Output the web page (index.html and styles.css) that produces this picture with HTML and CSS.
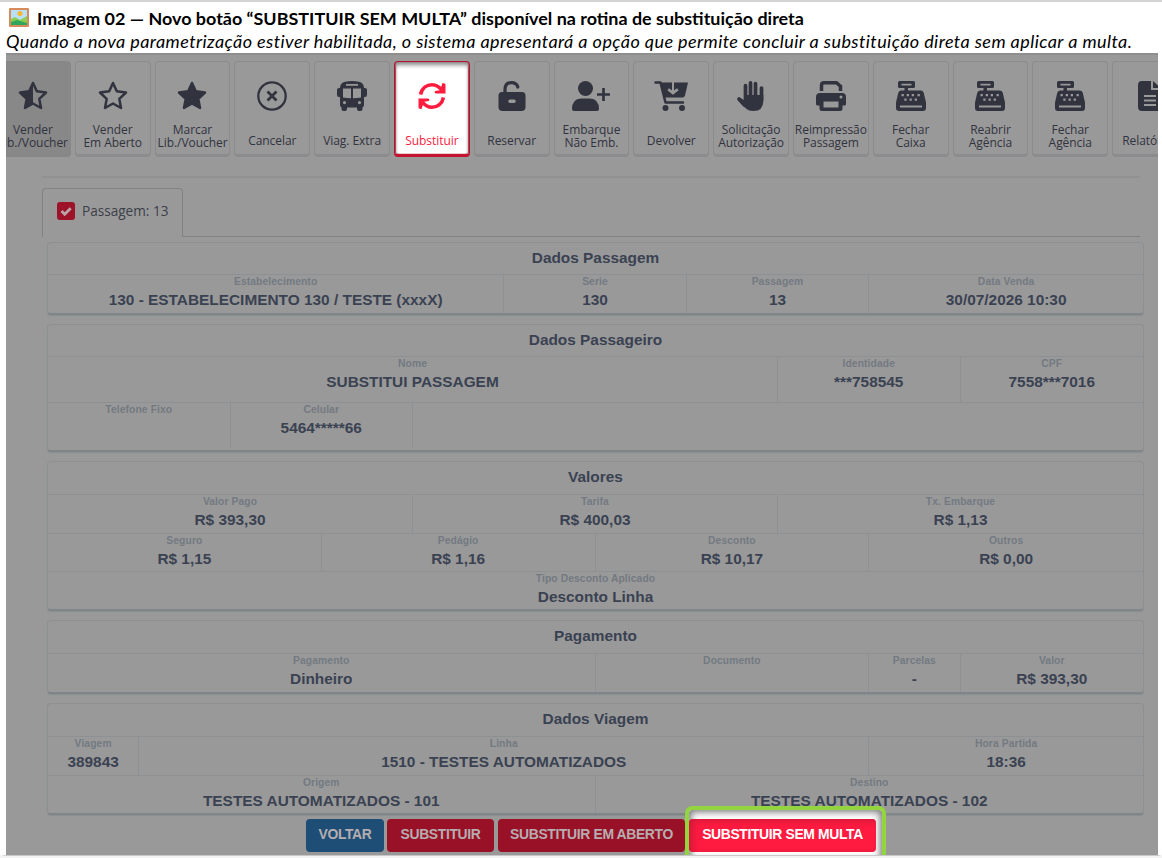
FILE: index.html
```html
<!DOCTYPE html>
<html lang="pt-BR">
<head>
<meta charset="utf-8">
<title>Substituir sem multa</title>
<link rel="stylesheet" href="styles.css">
</head>
<body>
<svg class="defs" aria-hidden="true">
  <symbol id="cash" viewBox="0 0 30 30"><path fill="currentColor" fill-rule="evenodd" d="M3.500 0h14q1.500 0 1.500 1.500v4q0 1.500-1.500 1.500H12v2.500h13q2.300 0 2.800 2.500L30 21.500V27q0 3-3 3H3q-3 0-3-3v-5.500l2.200-9.500Q2.700 9.500 5 9.500h3.500V7h-5Q2 7 2 5.500v-4Q2 0 3.500 0zM5.500 2.700v1.700h10V2.700zM4 24.500v2h22v-2zM5.500 13v2.200h2.300V13zM10.700 13v2.200H13V13zM15.700 13v2.200H18V13zM21.500 13v2.200h2.300V13zM8.300 17.500v2.200h2.300v-2.200zM13.500 17.500v2.200h2.300v-2.200zM18.700 17.500v2.200H21v-2.200z"/></symbol>
</svg>
<header class="caption">
  <h1 class="title"><svg class="picture" viewBox="0 0 20 19"><rect width="20" height="19" rx="1" fill="#d68b5d"/><path fill="#b9dff2" d="M2 2h16v15H2z"/><circle cx="11" cy="5.500" r="2.500" fill="#fbb52b"/><path fill="#8bcf54" d="M2 11l4-2 5 3 7-4v9H2z"/><path fill="#30a65b" d="M2 14l6-2 10 3v2H2z"/></svg><span class="title-text">Imagem 02 — Novo botão “SUBSTITUIR SEM MULTA” disponível na rotina de substituição direta</span></h1>
  <p class="subtitle">Quando a nova parametrização estiver habilitada, o sistema apresentará a opção que permite concluir a substituição direta sem aplicar a multa.</p>
</header>
<main class="screen">
  <nav class="toolbar">
    <div class="tool pressed"><svg class="icon" viewBox="0 0 30 30"><path fill="none" stroke="currentColor" stroke-width="2.500" stroke-linejoin="round" d="M15 2l3.800 8.300 9.200 1.200-6.700 6.300 1.700 9.200-8-4.500-8 4.500 1.700-9.200L2 11.500l9.200-1.200z"/><path fill="currentColor" d="M15 2v20.500L7 27l1.700-9.200L2 11.500l9.200-1.200z"/></svg><span class="name">Vender<br>Lib./Voucher</span></div>
    <div class="tool"><svg class="icon" viewBox="0 0 30 30"><path fill="none" stroke="currentColor" stroke-width="2.500" stroke-linejoin="round" d="M15 2l3.800 8.300 9.200 1.200-6.700 6.300 1.700 9.200-8-4.500-8 4.500 1.700-9.200L2 11.500l9.200-1.200z"/></svg><span class="name">Vender<br>Em Aberto</span></div>
    <div class="tool"><svg class="icon" viewBox="0 0 30 30"><path fill="currentColor" stroke="currentColor" stroke-width="2.500" stroke-linejoin="round" d="M15 2l3.800 8.300 9.200 1.200-6.700 6.300 1.700 9.200-8-4.500-8 4.500 1.700-9.200L2 11.500l9.200-1.200z"/></svg><span class="name">Marcar<br>Lib./Voucher</span></div>
    <div class="tool"><svg class="icon" viewBox="0 0 30 30"><g fill="none" stroke="currentColor" stroke-width="2.300"><circle cx="15" cy="15" r="13.700"/><path stroke-width="2.800" d="M10.500 10.500l9 9m0-9l-9 9"/></g></svg><span class="name one">Cancelar</span></div>
    <div class="tool"><svg class="icon" viewBox="0 0 30 30"><path fill="currentColor" fill-rule="evenodd" d="M8 0.800Q15-.8 22 .8q5 1.200 5 6.200h1q2 0 2 2v5q0 2-2 2h-1v8q0 2-1.500 2.300V28q0 2-2 2h-1.500q-2 0-2-2v-1.500H10V28q0 2-2 2H6.500q-2 0-2-2v-1.700Q3 26 3 24v-8H2q-2 0-2-2V9q0-2 2-2h1q0-5 5-6.200zM9 3v1.800h12V3zM6 7.500v9q4 .8 8 .8V7.500zM16 7.500v9.800q4 0 8-.8v-9zM7.500 20a1.600 1.600 0 1 0 0 3.200 1.600 1.600 0 1 0 0-3.200zM22.500 20a1.600 1.600 0 1 0 0 3.200 1.600 1.600 0 1 0 0-3.200z"/></svg><span class="name one">Viag. Extra</span></div>
    <div class="tool chosen"><svg class="icon" viewBox="0 0 30 30"><path fill="none" stroke="currentColor" stroke-width="3.600" d="M3.500 13.500C5 7 10 3.700 15 3.700c4.500 0 7.500 2.300 10 5.800M26.500 16.500C25 23 20 26.300 15 26.300c-4.500 0-7.500-2.300-10-5.800"/><path fill="currentColor" d="M25.500 2q3 0 3 2v8.500H19q-2-.5-1-2.500l5-.7zM4.500 28q-3 0-3-2v-8.500H11q2 .5 1 2.500l-5 .7z"/></svg><span class="name one">Substituir</span></div>
    <div class="tool"><svg class="icon" viewBox="0 0 30 30"><path fill="none" stroke="currentColor" stroke-width="3.200" stroke-linecap="round" d="M8 13V8.500q0-6.900 6.500-6.900 5 0 6.300 4.400"/><path fill="currentColor" fill-rule="evenodd" d="M5 11h20q3.500 0 3.500 3.500V26q0 4-4 4h-19q-4 0-4-4V14.500Q1.500 11 5 11zM13 18.500a1.700 1.700 0 0 0 0 3.500h4a1.700 1.700 0 0 0 0-3.500z"/></svg><span class="name one">Reservar</span></div>
    <div class="tool"><svg class="icon wide" viewBox="0 0 38 30"><circle cx="13.500" cy="7.500" r="7.500" fill="currentColor"/><path fill="currentColor" d="M0 28q0-10 9-10.500h9q9 .5 9 10.500 0 2-2 2H2q-2 0-2-2z"/><path stroke="currentColor" stroke-width="2.700" d="M25 13.500h13M31.500 7v13"/></svg><span class="name">Embarque<br>Não Emb.</span></div>
    <div class="tool"><svg class="icon wide" viewBox="0 0 34 30"><path fill="none" stroke="currentColor" stroke-width="2.500" stroke-linecap="round" stroke-linejoin="round" d="M1.500 1.500h5l5 20H29"/><path fill="currentColor" fill-rule="evenodd" d="M6.500 1.500H18v8l-3-2.300-1.700 2L19 13.800l5.700-4.600-1.700-2-3 2.300v-8h14l-3 13q-.5 2-2.500 2H10.500z"/><circle cx="11.500" cy="27" r="3" fill="currentColor"/><circle cx="28" cy="27" r="3" fill="currentColor"/></svg><span class="name one">Devolver</span></div>
    <div class="tool"><svg class="icon" viewBox="0 0 30 30"><path fill="none" stroke="currentColor" stroke-width="3.700" stroke-linecap="round" d="M9.500 18V4.500M14.500 16V1.900M19.500 16V2.500M25.500 19V7M3 18l5.500 6"/><path fill="currentColor" d="M8 14h19.300v6q0 10-10 10-5 0-8.500-3.500L2 19.500q1.500-4 6-.5z"/></svg><span class="name">Solicitação<br>Autorização</span></div>
    <div class="tool"><svg class="icon" viewBox="0 0 30 30"><path fill="none" stroke="currentColor" stroke-width="3.500" d="M5.500 10V4.500q0-2.700 2.700-2.700h12.300l4 3.500V10"/><path fill="currentColor" fill-rule="evenodd" d="M4 12h22q4 0 4 4v7q0 1.500-1.500 1.500H26.500v3Q26.500 30 24 30H6q-2.500 0-2.500-2.500v-3h-2Q0 24.500 0 23v-7q0-4 4-4zM7.500 20.500v6h15v-6zM25 14.500a1.500 1.500 0 1 0 0 3 1.500 1.500 0 1 0 0-3z"/></svg><span class="name">Reimpressão<br>Passagem</span></div>
    <div class="tool"><svg class="icon"><use href="#cash"/></svg><span class="name">Fechar<br>Caixa</span></div>
    <div class="tool"><svg class="icon"><use href="#cash"/></svg><span class="name">Reabrir<br>Agência</span></div>
    <div class="tool"><svg class="icon"><use href="#cash"/></svg><span class="name">Fechar<br>Agência</span></div>
    <div class="tool"><svg class="icon" viewBox="0 0 30 30"><path fill="currentColor" fill-rule="evenodd" d="M7 0h9v9h10v17q0 4-4 4H7q-4 0-4-4V4q0-4 4-4zM9 14v2h12v-2zM9 18.500v2h12v-2zM9 23v2h12v-2z"/><path fill="currentColor" d="M18 0l8 7h-8z"/></svg><span class="name one">Relatórios</span></div>
  </nav>
  <div class="rule"></div>
  <div class="tabs"><div class="tab"><span class="check"><svg viewBox="0 0 18 18"><path fill="none" stroke="#b9a5a8" stroke-width="2.800" d="M4.500 9l3.200 3.200 6-6"/></svg></span><span>Passagem: 13</span></div></div>

  <section class="card"><h2 class="heading">Dados Passagem</h2>
    <div class="row"><div class="cell s5"><span class="label">Estabelecimento</span><b class="value">130 - ESTABELECIMENTO 130 / TESTE (xxxX)</b></div><div class="cell s2"><span class="label">Serie</span><b class="value">130</b></div><div class="cell s2"><span class="label">Passagem</span><b class="value">13</b></div><div class="cell s3"><span class="label">Data Venda</span><b class="value">30/07/2026 10:30</b></div></div>
  </section>
  <section class="card passenger"><h2 class="heading">Dados Passageiro</h2>
    <div class="row"><div class="cell s8"><span class="label">Nome</span><b class="value">SUBSTITUI PASSAGEM</b></div><div class="cell s2"><span class="label">Identidade</span><b class="value">***758545</b></div><div class="cell s2"><span class="label">CPF</span><b class="value">7558***7016</b></div></div>
    <div class="row"><div class="cell s2"><span class="label">Telefone Fixo</span></div><div class="cell s2"><span class="label">Celular</span><b class="value">5464*****66</b></div><div class="cell s8"></div></div>
  </section>
  <section class="card amounts"><h2 class="heading">Valores</h2>
    <div class="row"><div class="cell s4"><span class="label">Valor Pago</span><b class="value">R$ 393,30</b></div><div class="cell s4"><span class="label">Tarifa</span><b class="value">R$ 400,03</b></div><div class="cell s4"><span class="label">Tx. Embarque</span><b class="value">R$ 1,13</b></div></div>
    <div class="row"><div class="cell s3"><span class="label">Seguro</span><b class="value">R$ 1,15</b></div><div class="cell s3"><span class="label">Pedágio</span><b class="value">R$ 1,16</b></div><div class="cell s3"><span class="label">Desconto</span><b class="value">R$ 10,17</b></div><div class="cell s3"><span class="label">Outros</span><b class="value">R$ 0,00</b></div></div>
    <div class="row"><div class="cell s12"><span class="label">Tipo Desconto Aplicado</span><b class="value">Desconto Linha</b></div></div>
  </section>
  <section class="card payment"><h2 class="heading">Pagamento</h2>
    <div class="row"><div class="cell s6"><span class="label">Pagamento</span><b class="value">Dinheiro</b></div><div class="cell s3"><span class="label">Documento</span></div><div class="cell s1"><span class="label">Parcelas</span><b class="value">-</b></div><div class="cell s2"><span class="label">Valor</span><b class="value">R$ 393,30</b></div></div>
  </section>
  <section class="card trip"><h2 class="heading">Dados Viagem</h2>
    <div class="row"><div class="cell s1"><span class="label">Viagem</span><b class="value">389843</b></div><div class="cell s8"><span class="label">Linha</span><b class="value">1510 - TESTES AUTOMATIZADOS</b></div><div class="cell s3"><span class="label">Hora Partida</span><b class="value">18:36</b></div></div>
    <div class="row"><div class="cell s6"><span class="label">Origem</span><b class="value">TESTES AUTOMATIZADOS - 101</b></div><div class="cell s6"><span class="label">Destino</span><b class="value">TESTES AUTOMATIZADOS - 102</b></div></div>
  </section>
  <div class="actions"><button class="btn back">VOLTAR</button><button class="btn swap">SUBSTITUIR</button><button class="btn open">SUBSTITUIR EM ABERTO</button><div class="spot"><button class="btn free">SUBSTITUIR SEM MULTA</button></div></div>
</main>
</body>
</html>
```
FILE: styles.css
```css
* { box-sizing: border-box; }
body { margin: 0; height: 858px; overflow: hidden; background: #f3f3f3; }
.defs { position: absolute; width: 0; height: 0; }
.caption { height: 53px; border-top: 2px solid #d4d4d4; background: #fff; color: #000; font-family: Lato, "Open Sans", sans-serif; white-space: nowrap; }
.title { display: flex; align-items: center; gap: 8px; margin: 0; padding: 4px 0 0 9px; height: 27px; font-size: 17.950px; line-height: 22px; font-weight: 700; }
.picture { width: 20px; height: 19px; }
.subtitle { margin: 0; padding: 0 0 0 6px; font-size: 18px; line-height: 25px; font-style: italic; letter-spacing: .42px; }
.screen { width: 1162px; height: 803px; overflow: hidden; background: #999; border: solid #fff; border-width: 0 4px 0 6px; border-bottom: 1px solid #c8c8c8; box-shadow: inset 0 2px #8e8e8f; color: #31333f; font-family: "Open Sans", sans-serif; }
.toolbar { display: flex; gap: 4px; margin: 8px 0 0 -11px; width: 1300px; height: 96px; }
.tool { flex: 0 0 75.800px; display: flex; flex-direction: column; align-items: center; border: 1px solid #8c8c8e; border-bottom-width: 3px; border-radius: 4px; background: #999; }
.pressed { background: #888; border-color: #878787; }
.icon { width: 30px; height: 30px; margin-top: 19px; flex: none; }
.wide { width: 38px; }
.name { height: 32px; margin-top: 9px; padding-top: 3px; font-size: 12px; line-height: 13px; letter-spacing: -.05px; text-align: center; white-space: nowrap; }
.one { padding-top: 14px; }
.chosen { background: #fff; border: 1px solid #b3132e; border-bottom: 3px solid #c0142f; color: #ff1b3e; box-shadow: inset 0 3px 4px #888, inset 1px 0 1px #b3132e, inset -1px 0 1px #b3132e; }
.rule { height: 2px; margin: 19px 18px 0 36px; background: #919191; }
.tabs { height: 49px; margin: 10px 18px 0 36px; border-bottom: 1px solid #828283; }
.tab { display: flex; gap: 7px; align-items: center; width: 141px; height: 49px; padding: 0 0 5px 14px; border: 1px solid #828283; border-bottom: 0; border-radius: 4px 4px 0 0; background: #999; color: #3c4049; font-size: 13.600px; }
.check { width: 18px; height: 18px; border-radius: 3px; background: #9d1229; }
.check svg { display: block; }
.card { width: 1097px; height: 73px; margin: 5px 0 0 41px; border: 1px solid #8d9093; border-bottom: 2px solid #7f8588; border-radius: 4px; box-shadow: 0 1px 1px #898e92; color: #3a4252; font-family: "Liberation Sans", Arial, sans-serif; }
.heading { height: 31px; margin: 0; font-size: 15.400px; line-height: 29px; font-weight: 700; text-align: center; }
.row { display: grid; grid-template-columns: repeat(12, 1fr); height: 38.600px; border-top: 1px solid #8e9193; }
.cell { display: flex; flex-direction: column; align-items: center; border-right: 1px solid #8e9193; white-space: nowrap; }
.cell:last-child { border-right: 0; }
.label { height: 15px; font-size: 10.300px; line-height: 14px; font-weight: 700; color: #737a82; letter-spacing: .1px; }
.value { font-size: 15.400px; line-height: 20px; letter-spacing: 0; }
.s1 { grid-column: span 1; }
.s2 { grid-column: span 2; }
.s3 { grid-column: span 3; }
.s4 { grid-column: span 4; }
.s5 { grid-column: span 5; }
.s6 { grid-column: span 6; }
.s8 { grid-column: span 8; }
.s12 { grid-column: span 12; }
.passenger { height: 128px; margin-top: 9px; }
.passenger .row { height: 46.200px; }
.amounts { height: 150px; margin-top: 9px; }
.amounts .heading, .payment .heading, .trip .heading { height: 32px; }
.payment { height: 74px; margin-top: 9px; }
.trip { height: 112px; margin-top: 9px; }
.actions { display: flex; position: relative; z-index: 1; align-items: flex-start; height: 50px; margin: -9px 0 0 300px; padding-top: 13px; }
.btn { flex: none; height: 33px; padding: 0 0 3px; border: 0; border-radius: 4px; background: #991127; color: #b6adb0; font: 700 13.900px/30px "Liberation Sans", Arial, sans-serif; letter-spacing: -.35px; white-space: nowrap; }
.back { width: 78px; margin-right: 3px; background: #1e4d75; }
.swap { width: 107px; margin-right: 4px; }
.open { width: 187px; }
.spot { flex: none; width: 201px; height: 60px; margin-top: -13px; padding: 9px 0 0; border: 4px solid #92d53f; border-radius: 7px; background: #fff; box-shadow: inset 0 0 7px 2px #777; }
.free { width: 187px; background: #ff1b40; color: #fff; box-shadow: inset 4px 2px 7px #d2193a; }
```
